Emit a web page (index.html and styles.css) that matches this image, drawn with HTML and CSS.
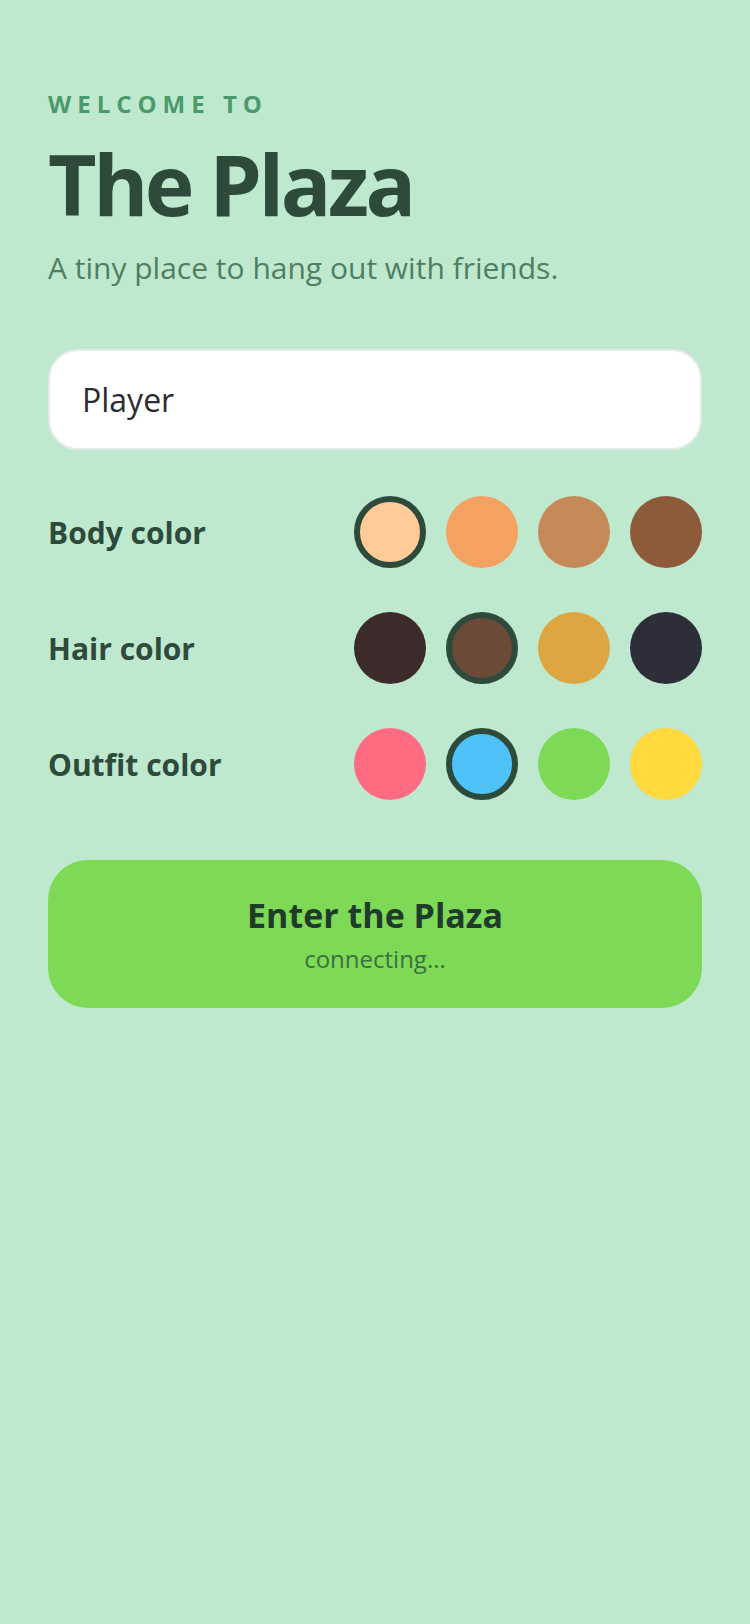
FILE: index.html
```html
<!DOCTYPE html>
<html lang="en">
<head>
<meta charset="utf-8">
<meta name="viewport" content="width=750">
<title>The Plaza</title>
<link rel="stylesheet" href="styles.css">
</head>
<body>
<main class="screen">
  <p class="eyebrow">WELCOME TO</p>
  <h1 class="title">The Plaza</h1>
  <p class="subtitle">A tiny place to hang out with friends.</p>

  <input class="name-input" type="text" value="Player" aria-label="Name">

  <div class="picker">
    <div class="row">
      <span class="label">Body color</span>
      <div class="swatches">
        <span class="swatch selected c-peach"></span>
        <span class="swatch c-orange"></span>
        <span class="swatch c-tan"></span>
        <span class="swatch c-brown"></span>
      </div>
    </div>
    <div class="row">
      <span class="label">Hair color</span>
      <div class="swatches">
        <span class="swatch c-dark"></span>
        <span class="swatch selected c-chestnut"></span>
        <span class="swatch c-gold"></span>
        <span class="swatch c-night"></span>
      </div>
    </div>
    <div class="row">
      <span class="label">Outfit color</span>
      <div class="swatches">
        <span class="swatch c-pink"></span>
        <span class="swatch selected c-sky"></span>
        <span class="swatch c-lime"></span>
        <span class="swatch c-yellow"></span>
      </div>
    </div>
  </div>

  <button class="enter" type="button">
    <span class="enter-title">Enter the Plaza</span>
    <span class="enter-sub">connecting...</span>
  </button>
</main>
</body>
</html>
```
FILE: styles.css
```css
* { box-sizing: border-box; }

html, body {
  margin: 0;
  padding: 0;
  background: #bee9ce;
}

body {
  font-family: "Open Sans", "Noto Sans", sans-serif;
  min-height: 1624px;
}

.screen {
  padding: 92px 48px 0 48px;
  display: flex;
  flex-direction: column;
}

.eyebrow {
  margin: 0;
  font-size: 24px;
  line-height: 24px;
  font-weight: 700;
  letter-spacing: 0.25em;
  color: #4c9a6c;
}

.title {
  margin: 26px 0 0 0;
  font-size: 84px;
  line-height: 84px;
  font-weight: 700;
  color: #2d4a3b;
  letter-spacing: -3.5px;
}

.subtitle {
  margin: 27px 0 0 0;
  font-size: 30px;
  line-height: 30px;
  font-weight: 400;
  color: #4f7e63;
}

.name-input {
  margin-top: 66px;
  height: 101px;
  width: 100%;
  border: 2px solid #e4eae6;
  border-radius: 30px;
  background: #ffffff;
  padding: 0 32px;
  font-family: "Open Sans", "Noto Sans", sans-serif;
  font-size: 32px;
  color: #2b2c33;
  outline: none;
}

.picker {
  margin-top: 46px;
  display: flex;
  flex-direction: column;
  gap: 44px;
}

.row {
  display: flex;
  align-items: center;
  justify-content: space-between;
  height: 72px;
}

.label {
  font-size: 30px;
  font-weight: 700;
  color: #2d4a3b;
}

.swatches {
  display: flex;
  gap: 20px;
}

.swatch {
  width: 72px;
  height: 72px;
  border-radius: 50%;
  display: block;
}

.swatch.selected {
  border: 6px solid #2d4a3b;
}

.c-peach { background: #ffcc99; }
.c-orange { background: #f4a261; }
.c-tan { background: #c68a59; }
.c-brown { background: #8d5a3a; }
.c-dark { background: #3d2b2b; }
.c-chestnut { background: #6b4a38; }
.c-gold { background: #dda640; }
.c-night { background: #2e2d3a; }
.c-pink { background: #ff6b81; }
.c-sky { background: #4fc3f7; }
.c-lime { background: #7ed957; }
.c-yellow { background: #ffd93d; }

.enter {
  margin-top: 60px;
  height: 148px;
  width: 100%;
  border: none;
  border-radius: 40px;
  background: #7ed957;
  display: flex;
  flex-direction: column;
  align-items: center;
  justify-content: center;
  gap: 15px;
  font-family: "Open Sans", "Noto Sans", sans-serif;
  padding: 0;
}

.enter-title {
  font-size: 34px;
  line-height: 34px;
  font-weight: 700;
  color: #1f3b29;
}

.enter-sub {
  font-size: 24px;
  line-height: 24px;
  font-weight: 400;
  color: #3b7040;
}
```
